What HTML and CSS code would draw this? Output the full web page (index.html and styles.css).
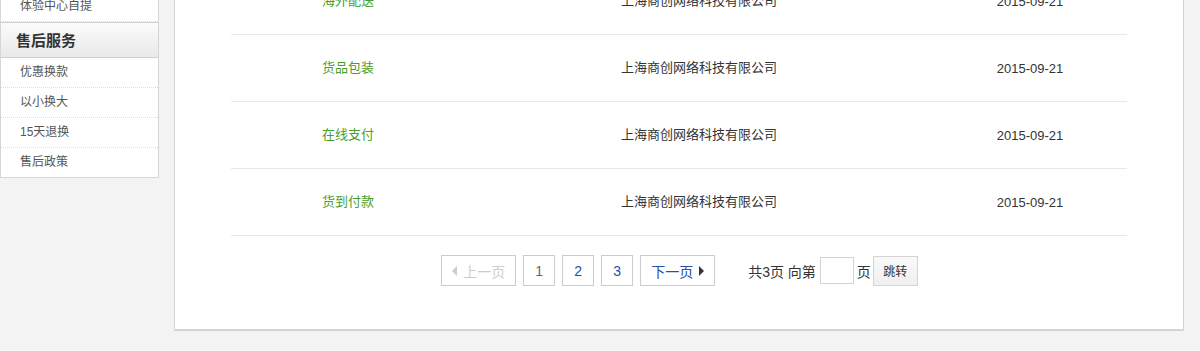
FILE: index.html
```html
<!DOCTYPE html>
<html lang="zh-CN">
<head>
<meta charset="utf-8">
<title>售后服务</title>
<link rel="stylesheet" href="styles.css">
</head>
<body>
<div class="layout">
  <aside class="sidebar">
    <ul class="side-list">
      <li class="side-item">体验中心自提</li>
    </ul>
    <h3 class="side-title">售后服务</h3>
    <ul class="side-list">
      <li class="side-item">优惠换款</li>
      <li class="side-item">以小换大</li>
      <li class="side-item">15天退换</li>
      <li class="side-item">售后政策</li>
    </ul>
  </aside>
  <main class="panel">
    <div class="table">
      <div class="row"><span class="c1">海外配送</span><span class="c2">上海商创网络科技有限公司</span><span class="c3">2015-09-21</span></div>
      <div class="row"><span class="c1">货品包装</span><span class="c2">上海商创网络科技有限公司</span><span class="c3">2015-09-21</span></div>
      <div class="row"><span class="c1">在线支付</span><span class="c2">上海商创网络科技有限公司</span><span class="c3">2015-09-21</span></div>
      <div class="row"><span class="c1">货到付款</span><span class="c2">上海商创网络科技有限公司</span><span class="c3">2015-09-21</span></div>
    </div>
    <div class="pager">
      <span class="pg pg-wide disabled"><i class="tri tri-left"></i>上一页</span>
      <span class="pg pg-num current">1</span>
      <span class="pg pg-num">2</span>
      <span class="pg pg-num">3</span>
      <span class="pg pg-wide">下一页<i class="tri tri-right"></i></span>
      <span class="pg-info">共3页 向第</span>
      <input class="pg-input" type="text">
      <span class="pg-unit">页</span>
      <button class="pg-go">跳转</button>
    </div>
  </main>
</div>
</body>
</html>
```
FILE: styles.css
```css
* { box-sizing: border-box; }
html, body { margin: 0; padding: 0; }
body {
  background: #f3f3f3;
  font-family: "Microsoft YaHei", "Liberation Sans", "Noto Sans CJK SC", sans-serif;
  color: #333;
  overflow: hidden;
}
.layout {
  display: flex;
  align-items: flex-start;
  margin-top: -33px;
}
.sidebar {
  width: 159px;
  margin-top: 25px;
  background: #fff;
  border: 1px solid #d6d6d6;
  border-top: none;
  flex: none;
}
.side-list { list-style: none; margin: 0; padding: 0; }
.side-item {
  height: 30px;
  line-height: 29px;
  padding-left: 19px;
  font-size: 12px;
  color: #555;
  border-bottom: 1px dotted #dcdcdc;
}
.side-list:last-child .side-item:last-child { border-bottom: none; height: 29px; }
.side-title {
  margin: 0;
  height: 36px;
  line-height: 36px;
  padding-left: 15px;
  font-size: 15px;
  font-weight: bold;
  color: #333;
  border-top: 1px solid #cfcfcf;
  border-bottom: 1px solid #cfcfcf;
  background: linear-gradient(#fbfbfb, #e9e9e9);
}
.panel {
  margin-left: 15px;
  width: 1010px;
  background: #fff;
  border: 1px solid #d4d4d4;
  border-bottom-width: 2px;
  padding: 0 55px 43px 56px;
  flex: none;
}
.table { width: 896px; }
.row {
  display: grid;
  grid-template-columns: 234px 468px 194px;
  height: 67px;
  padding-bottom: 3px;
  align-items: center;
  text-align: center;
  font-size: 13px;
  border-bottom: 1px solid #e8e8e8;
}
.c1 { color: #4a9e2b; }
.c2 { color: #333; }
.c3 { color: #333; padding-top: 3px; }
.pager {
  display: flex;
  align-items: center;
  justify-content: center;
  margin-top: 19px;
  font-size: 14px;
}
.pg {
  height: 31px;
  border: 1px solid #cccccc;
  display: inline-flex;
  align-items: center;
  justify-content: center;
  color: #2050a8;
  background: #fff;
  margin-right: 7px;
}
.pg-wide { width: 75px; }
.pg-num { width: 32px; }
.pg.current { color: #666; }
.pg.disabled { color: #cccccc; }
.tri { display: inline-block; width: 0; height: 0; border-top: 5px solid transparent; border-bottom: 5px solid transparent; }
.tri-left { border-right: 5px solid #cccccc; margin-right: 6px; }
.tri-right { border-left: 5px solid #333; margin-left: 6px; }
.pg-info { margin-left: 26px; color: #333; }
.pg-input {
  width: 34px;
  height: 27px;
  margin: 0 3px 0 4px;
  border: 1px solid #d4d4d4;
  padding: 0;
  outline: none;
}
.pg-unit { color: #333; }
.pg-go {
  width: 45px;
  height: 30px;
  margin-left: 2px;
  border: 1px solid #d4d4d4;
  background: linear-gradient(#fafafa, #efefef);
  font-family: inherit;
  font-size: 12px;
  color: #333;
  padding: 0;
}
```
